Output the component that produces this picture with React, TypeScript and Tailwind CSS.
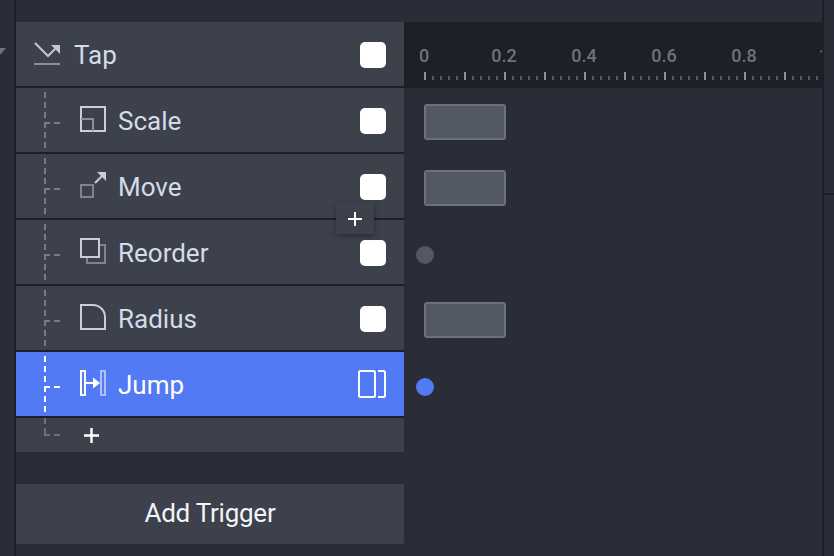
import React from "react";

// dashed tree connector, drawn once per row
const Branch = ({ active }: { active?: boolean }) => (
  <svg
    width="16"
    height="64"
    viewBox="0 0 16 64"
    className="shrink-0"
    fill="none"
    stroke={active ? "#ffffff" : "#767b86"}
    strokeWidth="2"
  >
    <path d="M1 4V64" strokeDasharray="6 4" />
    <path d="M0 35H6M10 35H16" />
  </svg>
);

const BranchEnd = () => (
  <svg width="16" height="34" viewBox="0 0 16 34" className="shrink-0" fill="none" stroke="#6b707b" strokeWidth="2">
    <path d="M1 0V6M1 10V18" />
    <path d="M0 17H6M10 17H16" />
  </svg>
);

const TapIcon = () => (
  <svg width="26" height="24" viewBox="0 0 26 24" fill="none" className="mb-[2px] shrink-0">
    <path d="M1 2L14 15L23 6" stroke="#c3c8d2" strokeWidth="2" />
    <path d="M17 4H26V13Z" fill="#c3c8d2" />
    <path d="M0 23H26" stroke="#8a8f9a" strokeWidth="2" />
  </svg>
);

const ScaleIcon = () => (
  <svg width="26" height="26" viewBox="0 0 26 26" fill="none">
    <rect x="1" y="1" width="24" height="24" stroke="#c9ced8" strokeWidth="2" />
    <path d="M1 13H13V25" stroke="#8a8f9a" strokeWidth="2" />
  </svg>
);

const MoveIcon = () => (
  <svg width="26" height="26" viewBox="0 0 26 26" fill="none">
    <rect x="1" y="13" width="12" height="12" stroke="#7f848f" strokeWidth="2" />
    <path d="M15 11L22 4" stroke="#c9ced8" strokeWidth="2" />
    <path d="M17 0H26V9Z" fill="#c9ced8" />
  </svg>
);

const ReorderIcon = () => (
  <svg width="26" height="26" viewBox="0 0 26 26" fill="none">
    <path d="M19 7H25V25H7V19" stroke="#7f848f" strokeWidth="2" />
    <rect x="1" y="1" width="18" height="18" stroke="#c9ced8" strokeWidth="2" />
  </svg>
);

const RadiusIcon = () => (
  <svg width="26" height="26" viewBox="0 0 26 26" fill="none">
    <path d="M1 1H13A12 12 0 0 1 25 13V25H1Z" stroke="#c9ced8" strokeWidth="2" />
  </svg>
);

const JumpIcon = () => (
  <svg width="26" height="26" viewBox="0 0 26 26" fill="none">
    <rect x="1" y="1" width="4" height="24" stroke="#ffffff" strokeWidth="2" />
    <path d="M6 13H15" stroke="#ffffff" strokeWidth="2" />
    <path d="M13 7.5L20 13L13 18.5Z" fill="#ffffff" />
    <rect x="21" y="1" width="4" height="24" stroke="#aebffa" strokeWidth="2" />
  </svg>
);

const SplitIcon = () => (
  <svg width="28" height="28" viewBox="0 0 28 28" fill="none">
    <rect x="1" y="1" width="16" height="26" rx="1.5" stroke="#ffffff" strokeWidth="2" />
    <path d="M20 1H25.5A1.5 1.5 0 0 1 27 2.5V25.5A1.5 1.5 0 0 1 25.5 27H20" stroke="#ffffff" strokeWidth="2" />
  </svg>
);

const Check = () => <div className="mt-[2px] size-[26px] shrink-0 rounded-[5px] bg-white" />;

const ROWS = [
  { label: "Scale", Icon: ScaleIcon },
  { label: "Move", Icon: MoveIcon },
  { label: "Reorder", Icon: ReorderIcon },
  { label: "Radius", Icon: RadiusIcon },
];

const TRACKS = ["clip", "clip", "dot", "clip", "active"];

const Ruler = () => {
  const ticks = Array.from({ length: 50 }, (_, i) => i);
  return (
    <div className="relative h-[66px] overflow-hidden bg-[#1e2028]">
      <div className="-ml-[20px] flex h-[46px] items-end text-[18px] font-medium leading-[24px] text-[#6e7380]">
        {["0", "0.2", "0.4", "0.6", "0.8", "1"].map((n) => (
          <span key={n} className="w-[80px] shrink-0 text-center">
            {n}
          </span>
        ))}
      </div>
      <div className="absolute left-[20px] top-[50px] flex h-[8px] items-end">
        {ticks.map((i) => (
          <div
            key={i}
            className={
              i % 5 === 0
                ? "mr-[6px] h-[8px] w-[2px] shrink-0 bg-[#8b909c]"
                : "mr-[6px] h-[4px] w-[2px] shrink-0 bg-[#555a66]"
            }
          />
        ))}
      </div>
    </div>
  );
};

export default function App() {
  return (
    <div className="flex h-[556px] w-[834px] overflow-hidden bg-[#2a2d37] font-['Roboto',sans-serif]">
      {/* gutter */}
      <div className="relative w-[16px] shrink-0 border-r-2 border-[#1c1f26]">
        <div className="absolute left-[-6px] top-[48px] h-0 w-0 border-x-[6px] border-t-[7px] border-x-transparent border-t-[#6e7380]" />
      </div>

      {/* layer list */}
      <div className="relative flex w-[388px] shrink-0 flex-col pt-[22px]">
        <div className="flex h-[64px] items-center bg-[#3c414c] px-[18px] text-[26px] text-[#d5dbe9]">
          <TapIcon />
          <span className="ml-[14px] mt-[2px] flex-1">Tap</span>
          <Check />
        </div>
        {ROWS.map(({ label, Icon }) => (
          <div
            key={label}
            className="flex h-[66px] items-center border-t-2 border-[#1c1f26] bg-[#3c414c] pl-[28px] pr-[18px] text-[26px] text-[#d5dbe9]"
          >
            <Branch />
            <span className="mb-[2px] ml-[20px] flex size-[26px] shrink-0">
              <Icon />
            </span>
            <span className="ml-[12px] mt-[2px] flex-1">{label}</span>
            <Check />
          </div>
        ))}
        <div className="flex h-[66px] items-center border-t-2 border-[#1c1f26] bg-[#537af5] pl-[28px] pr-[18px] text-[26px] text-white">
          <Branch active />
          <span className="mb-[2px] ml-[20px] flex size-[26px] shrink-0">
            <JumpIcon />
          </span>
          <span className="ml-[12px] mt-[2px] flex-1">Jump</span>
          <SplitIcon />
        </div>
        <div className="flex h-[36px] items-start border-t-2 border-[#1c1f26] bg-[#3c414c] pl-[28px]">
          <BranchEnd />
          <svg width="15" height="15" viewBox="0 0 15 15" className="ml-[24px] mt-[10px]" fill="none" stroke="#ffffff" strokeWidth="2.4">
            <path d="M0 7.5H15M7.5 0V15" />
          </svg>
        </div>
        <div className="mt-[32px] flex h-[60px] items-center justify-center rounded-[2px] bg-[#3c414c] pb-[2px] text-[26px] tracking-[-0.25px] text-[#f2f4f8]">
          Add Trigger
        </div>

        {/* add button over the row divider */}
        <div className="absolute left-[320px] top-[203px] flex h-[31px] w-[38px] items-center justify-center bg-[#3c414c] shadow-[0_2px_6px_rgba(0,0,0,0.35)]">
          <svg width="14" height="14" viewBox="0 0 14 14" fill="none" stroke="#ffffff" strokeWidth="2">
            <path d="M0 7H14M7 0V14" />
          </svg>
        </div>
      </div>

      {/* timeline */}
      <div className="w-[418px] shrink-0 pt-[22px]">
        <Ruler />
        {TRACKS.map((t, i) => (
          <div key={i} className="flex h-[66px] items-center">
            {t === "clip" && (
              <div className="ml-[20px] mt-[2px] h-[36px] w-[82px] rounded-[3px] border-2 border-[#6b717d] bg-[#525864]" />
            )}
            {t === "dot" && <div className="ml-[12px] mt-[4px] size-[18px] rounded-full bg-[#525864]" />}
            {t === "active" && <div className="ml-[12px] mt-[4px] size-[18px] rounded-full bg-[#537af5]" />}
          </div>
        ))}
      </div>

      {/* right edge */}
      <div className="flex-1 border-l-2 border-[#1c1f26]">
        <div className="h-[195px] border-b-2 border-[#1c1f26]" />
      </div>
    </div>
  );
}
